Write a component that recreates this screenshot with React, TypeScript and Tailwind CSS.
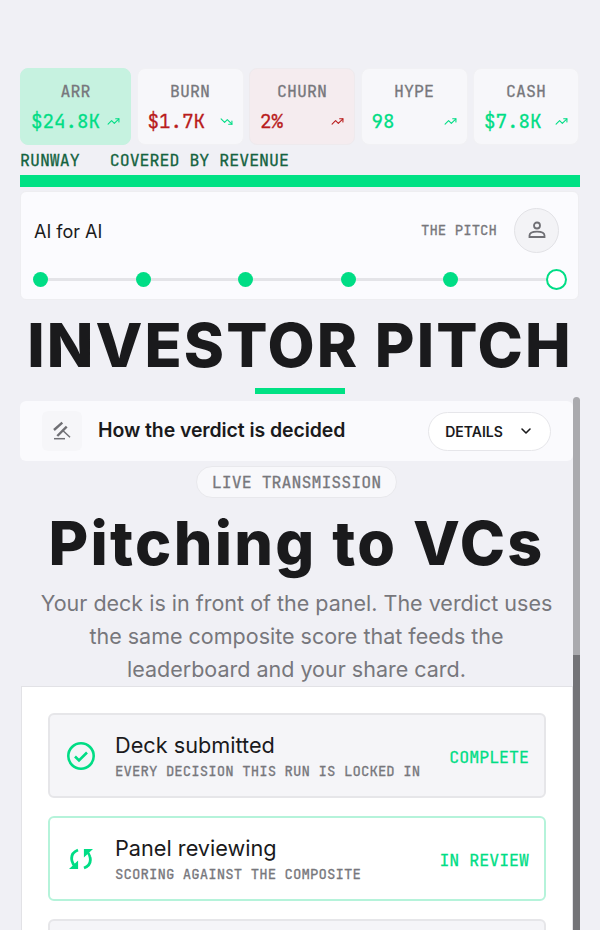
import { ChevronDown, TrendingUp, TrendingDown } from "lucide-react";

const MONO = "font-['JetBrains_Mono','DejaVu_Sans_Mono',monospace] [-webkit-text-stroke:0.3px_currentColor]";

const metrics = [
  { label: "ARR", value: "$24.8K", tone: "text-[#00dd85]", bg: "bg-[#c6f2e0] border-[#c6f2e0]", down: false },
  { label: "BURN", value: "$1.7K", tone: "text-[#b91c1c]", bg: "bg-[#f7f7fa] border-[#f1f1f4]", down: true, iconTone: "text-[#00dd85]" },
  { label: "CHURN", value: "2%", tone: "text-[#b91c1c]", bg: "bg-[#f5ecef] border-[#eeeaed]", down: false },
  { label: "HYPE", value: "98", tone: "text-[#00dd85]", bg: "bg-[#f7f7fa] border-[#f1f1f4]", down: false },
  { label: "CASH", value: "$7.8K", tone: "text-[#00dd85]", bg: "bg-[#f7f7fa] border-[#f1f1f4]", down: false },
];

function Metric({ m }: { m: (typeof metrics)[number] }) {
  const Icon = m.down ? TrendingDown : TrendingUp;
  return (
    <div className={`h-[77px] rounded-lg border px-[10px] pt-[12px] ${m.bg}`}>
      <div className={`${MONO} text-center text-[16.6px] leading-[20px] text-[#77777c]`}>{m.label}</div>
      <div className="mt-[8px] flex items-center justify-between">
        <span className={`${MONO} text-[19.2px] leading-[24px] ${m.tone}`}>{m.value}</span>
        <Icon size={13} strokeWidth={2} className={m.iconTone ?? m.tone} />
      </div>
    </div>
  );
}

function GavelIcon() {
  return (
    <svg width="20" height="20" viewBox="0 0 20 20" fill="none" stroke="#6f6f74" strokeWidth="1.5">
      <path d="M2 17.7h11" />
      <path d="M10.3 9l7.7 7.3" />
      <path d="M2 9l8.3-7.3" strokeWidth="2.4" />
      <path d="M5.3 15l9.4-9.3" strokeWidth="2.4" />
    </svg>
  );
}

function PersonIcon() {
  return (
    <svg width="20" height="20" viewBox="0 0 20 20" fill="none" stroke="#6f6f74" strokeWidth="1.8">
      <circle cx="10" cy="5.5" r="3" />
      <path d="M2.5 17v-1.5c0-2.5 3.5-3.8 7.5-3.8s7.5 1.3 7.5 3.8V17z" />
    </svg>
  );
}

function CheckIcon() {
  return (
    <svg width="30" height="30" viewBox="0 0 30 30" fill="none" stroke="#00dd85" strokeWidth="2.6">
      <circle cx="15" cy="15" r="12.7" />
      <path d="M9 15.5l4 4 8-8" />
    </svg>
  );
}

function SyncIcon() {
  return (
    <svg width="24" height="24" viewBox="0 0 24 24" fill="none" stroke="#00dd85" strokeWidth="2.8">
      <path d="M9 3C4 5 1.8 9 3 14c.4 2 1.5 4 3.5 5.5" />
      <path d="M1.5 21.5h7v-6.5z" fill="#00dd85" strokeWidth="1.2" />
      <path d="M15 21c5-2 7.2-6 6-11-.4-2-1.5-4-3.5-5.5" />
      <path d="M22.5 2.5h-7v6.5z" fill="#00dd85" strokeWidth="1.2" />
    </svg>
  );
}

function StepDot({ open }: { open?: boolean }) {
  if (open) return <span className="relative size-[21px] rounded-full border-2 border-[#00dd85] bg-white" />;
  return <span className="relative size-[15px] rounded-full bg-[#00dd85]" />;
}

function Step(props: { title: string; sub: string; status: string; active?: boolean; icon: React.ReactNode }) {
  const box = props.active ? "bg-white border-[#b5f3da]" : "bg-[#f5f5f8] border-[#e6e6e9]";
  return (
    <div className={`flex h-[85px] items-center rounded-md border-2 pl-[16px] pr-[15px] ${box}`}>
      <div className="flex w-[30px] justify-center">{props.icon}</div>
      <div className="ml-[19px] flex-1">
        <div className="text-[21.7px] leading-[28px] text-[#1a1a1c]">{props.title}</div>
        <div className={`${MONO} mt-[2px] text-[14px] leading-[20px] tracking-[0.08px] text-[#77777c]`}>{props.sub}</div>
      </div>
      <div className={`${MONO} mt-[4px] text-[16.6px] text-[#00dd85]`}>{props.status}</div>
    </div>
  );
}

export default function App() {
  return (
    <div className="relative h-[930px] w-[600px] overflow-hidden bg-[#f0f0f5] px-5 pt-[68px] font-['Inter',sans-serif]">
      <div className="grid grid-cols-[111px_107px_106px_107px_106px] gap-x-[5.5px]">
        {metrics.map((m) => (
          <Metric key={m.label} m={m} />
        ))}
      </div>

      <div className={`${MONO} mt-[5px] flex h-[20px] items-center gap-[30px] text-[16.6px] leading-[20px] text-[#14633f]`}>
        <span>RUNWAY</span>
        <span>COVERED BY REVENUE</span>
      </div>
      <div className="mt-[5px] h-[12px] w-full bg-[#00e184]" />

      <div className="mt-[4px] h-[109px] w-[559px] rounded-md border border-[#eeeef1] bg-[#fbfbfe] px-[13px] pt-[16px]">
        <div className="flex h-[44px] items-center justify-between pr-[6px]">
          <span className="mt-[2px] text-[18px] text-[#1a1a1c]">AI for AI</span>
          <div className="flex items-center gap-[17px]">
            <span className={`${MONO} text-[14px] tracking-[0.05px] text-[#77777c]`}>THE PITCH</span>
            <span className="flex size-[45px] items-center justify-center rounded-full border border-[#e2e2e6] bg-[#f3f3f6]">
              <PersonIcon />
            </span>
          </div>
        </div>
        <div className="relative mt-[16px] -ml-px flex h-[22px] w-[534px] items-center justify-between">
          <div className="absolute inset-x-[10px] top-[10px] h-[3px] bg-[#e4e4e8]" />
          <StepDot />
          <StepDot />
          <StepDot />
          <StepDot />
          <StepDot />
          <StepDot open />
        </div>
      </div>

      <h1 className="mt-[10px] text-center text-[61px] font-extrabold leading-[70px] tracking-[2.1px] text-[#1a1a1c]">
        INVESTOR PITCH
      </h1>
      <div className="mx-auto mt-[8px] h-[6px] w-[90px] bg-[#00e184]" />

      <div className="mt-[7px] flex h-[60px] w-[553px] items-center rounded-md bg-[#fafafd] pl-[22px] pr-[22px]">
        <span className="flex size-[40px] items-center justify-center rounded-md bg-[#f6f6f9]">
          <GavelIcon />
        </span>
        <span className="ml-[16px] flex-1 text-[19.5px] font-semibold tracking-[-0.1px] text-[#1a1a1c]">How the verdict is decided</span>
        <span className="flex h-[39px] w-[123px] items-center justify-center gap-[15px] rounded-full border border-[#e6e6ea] bg-white text-[14px] font-semibold text-[#1a1a1c]">
          DETAILS
          <ChevronDown size={16} strokeWidth={2.4} />
        </span>
      </div>

      <div className="w-[553px] text-center">
        <span className={`${MONO} mt-[5px] inline-block h-[32px] rounded-full border border-[#e8e8ec] bg-[#f8f8fb] px-[15px] text-[16.6px] leading-[30px] text-[#77777c]`}>
          LIVE TRANSMISSION
        </span>
        <h2 className="mt-[12px] whitespace-nowrap text-[61px] font-extrabold leading-[66px] tracking-[2.3px] text-[#1a1a1c]">Pitching to VCs</h2>
        <p className="mx-auto mt-[11px] w-[525px] text-[21.5px] leading-[33px] text-[#77777c]">
          Your deck is in front of the panel. The verdict uses the same composite score that feeds the leaderboard and your share card.
        </p>
      </div>

      <div className="ml-px h-[260px] w-[552px] border-x border-t border-[#e2e2e6] bg-white px-[26px] pt-[26px]">
        <div className="flex flex-col gap-[18px]">
          <Step title="Deck submitted" sub="EVERY DECISION THIS RUN IS LOCKED IN" status="COMPLETE" icon={<CheckIcon />} />
          <Step title="Panel reviewing" sub="SCORING AGAINST THE COMPOSITE" status="IN REVIEW" active icon={<SyncIcon />} />
          <div className="h-[85px] rounded-md border-2 border-[#e6e6e9] bg-[#f5f5f8]" />
        </div>
      </div>

      <div className="absolute left-[573px] top-[397px] h-[258px] w-[7px] rounded-t-full bg-[#aaaaae]" />
      <div className="absolute left-[573px] top-[655px] h-[275px] w-[7px] bg-[#737377]" />
    </div>
  );
}
